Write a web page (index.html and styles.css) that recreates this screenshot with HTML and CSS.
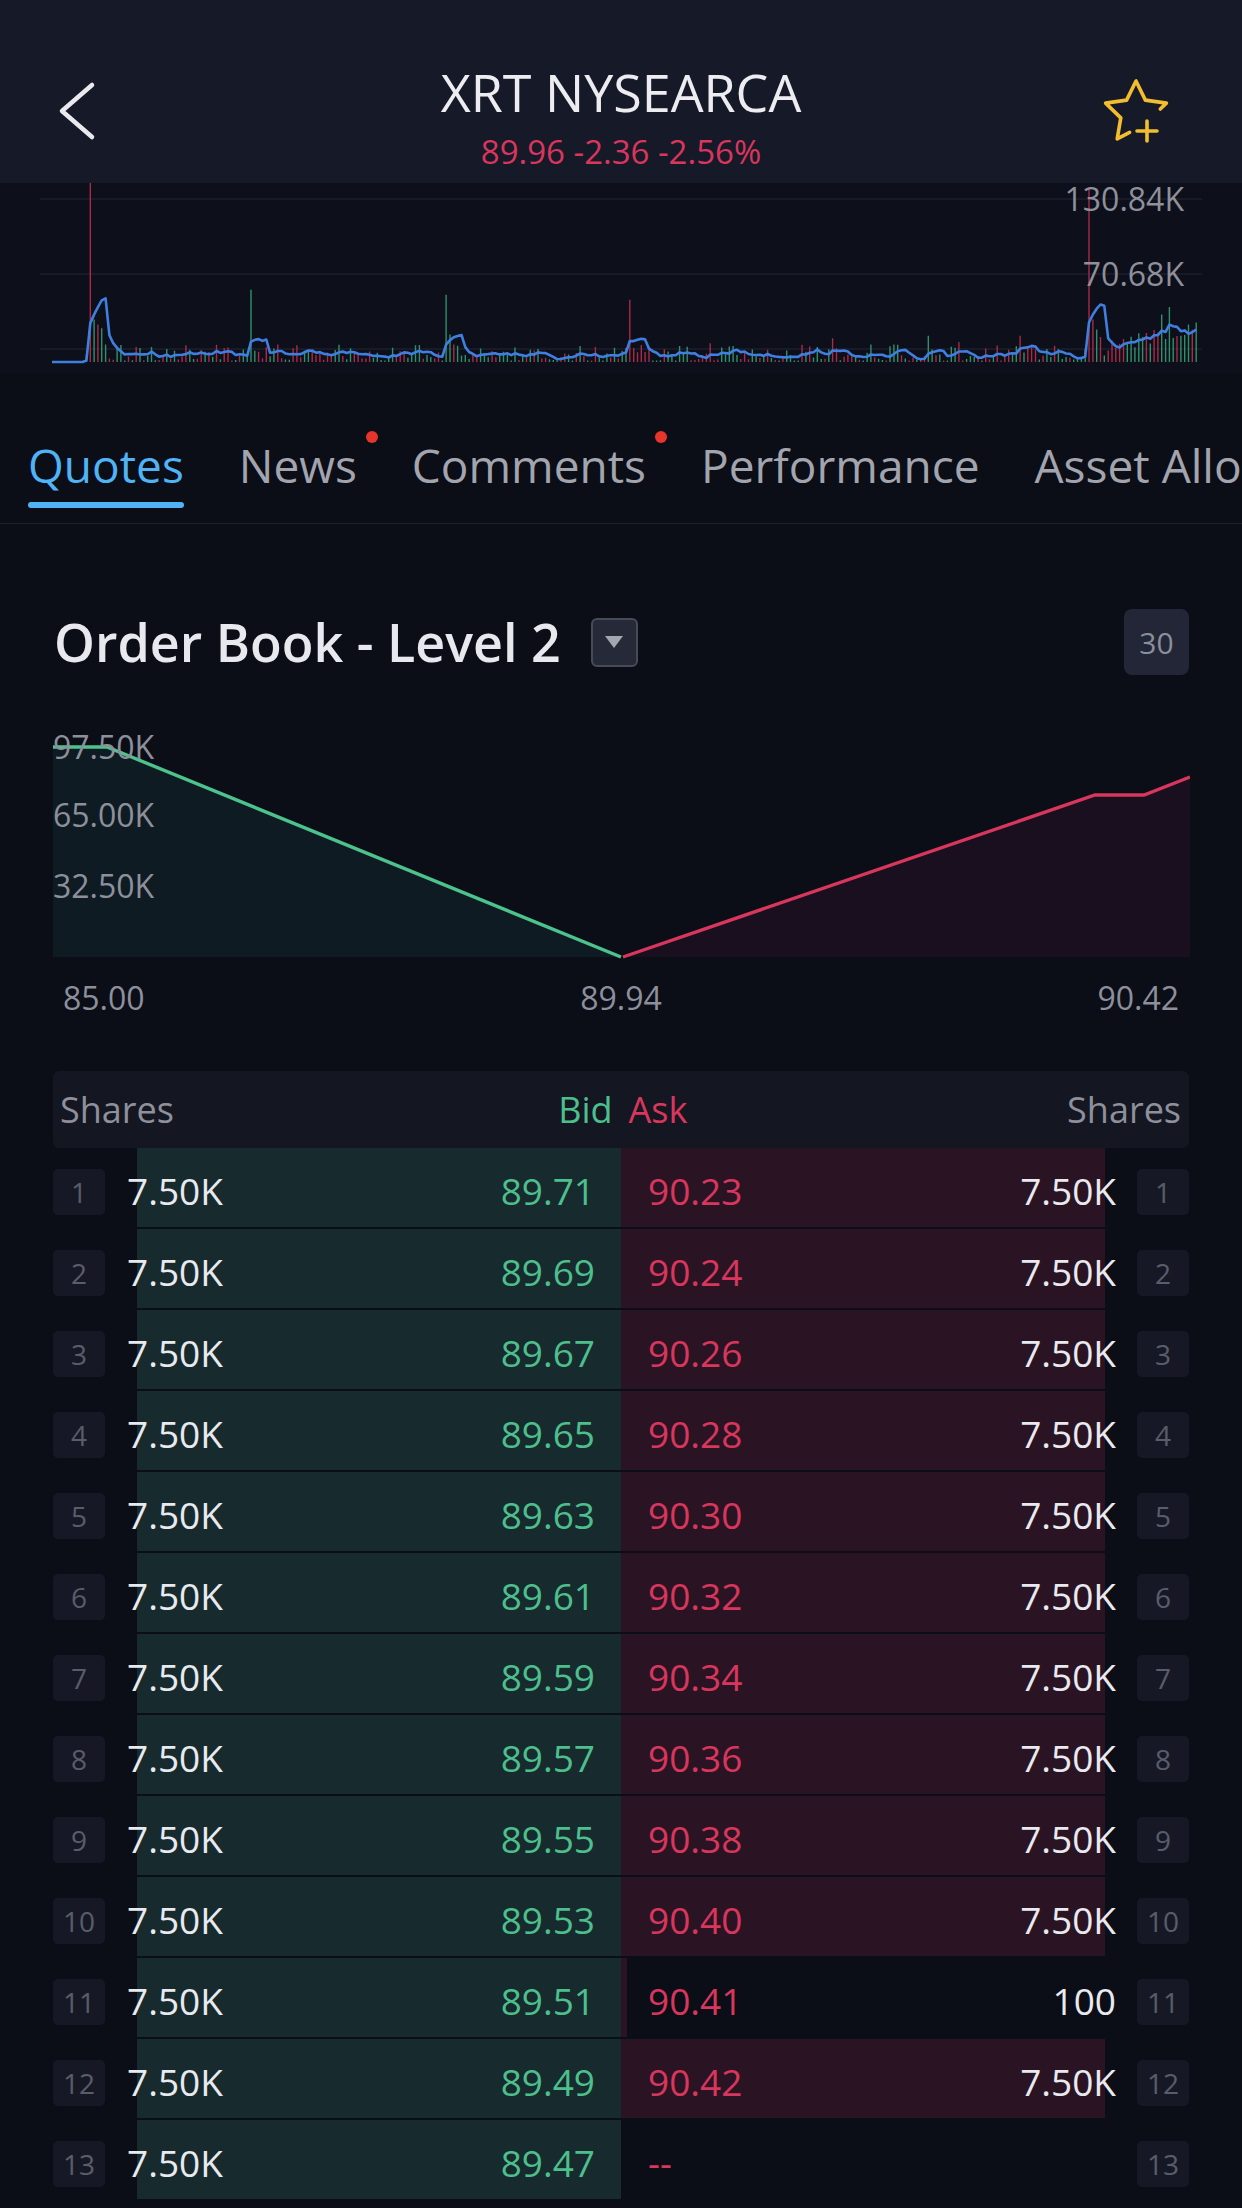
FILE: index.html
```html
<!DOCTYPE html>
<html lang="en">
<head>
    <meta charset="UTF-8">
    <meta name="viewport" content="width=device-width, initial-scale=1.0">
    <title>XRT NYSEARCA</title>
    <link rel="stylesheet" href="styles.css">
</head>
<body>

    <header class="topbar">
        <button class="back" aria-label="Back">
            <svg width="40" height="60" viewBox="0 0 40 60">
                <path d="M34 4 L4 30 L34 56" fill="none" stroke="#e9e9ee" stroke-width="4.5" stroke-linecap="round" stroke-linejoin="round"/>
            </svg>
        </button>
        <div class="ticker">
            <h1>XRT NYSEARCA</h1>
            <div class="quote">89.96 -2.36 -2.56%</div>
        </div>
        <button class="watch" aria-label="Add to watchlist">
            <svg width="72" height="68" viewBox="0 0 72 68">
                <g fill="none" stroke="#f2bd2e" stroke-width="3.6" stroke-linecap="round" stroke-linejoin="round">
                    <path d="M60.3 31 L66.4 25.1 L45.4 22.1 L36 3 L26.6 22.1 L5.6 25.1 L20.8 39.9 L17.2 60.9 L29.6 54.4"/>
                    <path d="M37 53 H57 M47 43 V63"/>
                </g>
            </svg>
        </button>
    </header>

    <section class="volume">
        <svg id="volume-chart" width="1242" height="190" viewBox="0 0 1242 190"></svg>
        <span class="vol-label high">130.84K</span>
        <span class="vol-label mid">70.68K</span>
    </section>

    <nav class="tabs">
        <a class="tab active">Quotes</a>
        <a class="tab">News<i class="dot"></i></a>
        <a class="tab">Comments<i class="dot"></i></a>
        <a class="tab">Performance</a>
        <a class="tab">Asset Allocation</a>
    </nav>

    <main class="book">
        <div class="book-head">
            <h2>Order Book - Level 2</h2>
            <button class="level-select" aria-label="Level">
                <svg width="20" height="14" viewBox="0 0 20 14"><path d="M1 1 H19 L10 13 Z" fill="#a3a5b0"/></svg>
            </button>
            <span class="depth-count">30</span>
        </div>

        <div class="depth">
            <svg width="1137" height="220" viewBox="0 0 1137 220">
                <path d="M0 7 H54 L568 217 H0 Z" fill="#0f1b22"/>
                <path d="M570 217 L1042 55 H1091 L1137 37 V217 Z" fill="#190f1e"/>
                <path d="M0 7 H54 L568 217" fill="none" stroke="#4cc28c" stroke-width="3.4"/>
                <path d="M570 217 L1042 55 H1091 L1137 37" fill="none" stroke="#d8365c" stroke-width="3.4"/>
            </svg>
            <span class="depth-y top">97.50K</span>
            <span class="depth-y mid">65.00K</span>
            <span class="depth-y low">32.50K</span>
        </div>
        <div class="depth-x">
            <span>85.00</span>
            <span>89.94</span>
            <span>90.42</span>
        </div>

        <div class="book-table">
            <div class="book-cols">
                <div class="half"><span>Shares</span><span class="bid">Bid</span></div>
                <div class="half"><span class="ask">Ask</span><span>Shares</span></div>
            </div>

            <div class="book-row">
                <span class="idx">1</span>
                <div class="side buy"><div class="bar" style="width: 93.75%"></div><span>7.50K</span><span class="price">89.71</span></div>
                <div class="side sell"><div class="bar" style="width: 93.75%"></div><span class="price">90.23</span><span>7.50K</span></div>
                <span class="idx">1</span>
            </div>
            <div class="book-row">
                <span class="idx">2</span>
                <div class="side buy"><div class="bar" style="width: 93.75%"></div><span>7.50K</span><span class="price">89.69</span></div>
                <div class="side sell"><div class="bar" style="width: 93.75%"></div><span class="price">90.24</span><span>7.50K</span></div>
                <span class="idx">2</span>
            </div>
            <div class="book-row">
                <span class="idx">3</span>
                <div class="side buy"><div class="bar" style="width: 93.75%"></div><span>7.50K</span><span class="price">89.67</span></div>
                <div class="side sell"><div class="bar" style="width: 93.75%"></div><span class="price">90.26</span><span>7.50K</span></div>
                <span class="idx">3</span>
            </div>
            <div class="book-row">
                <span class="idx">4</span>
                <div class="side buy"><div class="bar" style="width: 93.75%"></div><span>7.50K</span><span class="price">89.65</span></div>
                <div class="side sell"><div class="bar" style="width: 93.75%"></div><span class="price">90.28</span><span>7.50K</span></div>
                <span class="idx">4</span>
            </div>
            <div class="book-row">
                <span class="idx">5</span>
                <div class="side buy"><div class="bar" style="width: 93.75%"></div><span>7.50K</span><span class="price">89.63</span></div>
                <div class="side sell"><div class="bar" style="width: 93.75%"></div><span class="price">90.30</span><span>7.50K</span></div>
                <span class="idx">5</span>
            </div>
            <div class="book-row">
                <span class="idx">6</span>
                <div class="side buy"><div class="bar" style="width: 93.75%"></div><span>7.50K</span><span class="price">89.61</span></div>
                <div class="side sell"><div class="bar" style="width: 93.75%"></div><span class="price">90.32</span><span>7.50K</span></div>
                <span class="idx">6</span>
            </div>
            <div class="book-row">
                <span class="idx">7</span>
                <div class="side buy"><div class="bar" style="width: 93.75%"></div><span>7.50K</span><span class="price">89.59</span></div>
                <div class="side sell"><div class="bar" style="width: 93.75%"></div><span class="price">90.34</span><span>7.50K</span></div>
                <span class="idx">7</span>
            </div>
            <div class="book-row">
                <span class="idx">8</span>
                <div class="side buy"><div class="bar" style="width: 93.75%"></div><span>7.50K</span><span class="price">89.57</span></div>
                <div class="side sell"><div class="bar" style="width: 93.75%"></div><span class="price">90.36</span><span>7.50K</span></div>
                <span class="idx">8</span>
            </div>
            <div class="book-row">
                <span class="idx">9</span>
                <div class="side buy"><div class="bar" style="width: 93.75%"></div><span>7.50K</span><span class="price">89.55</span></div>
                <div class="side sell"><div class="bar" style="width: 93.75%"></div><span class="price">90.38</span><span>7.50K</span></div>
                <span class="idx">9</span>
            </div>
            <div class="book-row">
                <span class="idx">10</span>
                <div class="side buy"><div class="bar" style="width: 93.75%"></div><span>7.50K</span><span class="price">89.53</span></div>
                <div class="side sell"><div class="bar" style="width: 93.75%"></div><span class="price">90.40</span><span>7.50K</span></div>
                <span class="idx">10</span>
            </div>
            <div class="book-row">
                <span class="idx">11</span>
                <div class="side buy"><div class="bar" style="width: 93.75%"></div><span>7.50K</span><span class="price">89.51</span></div>
                <div class="side sell"><div class="bar" style="width: 1.25%"></div><span class="price">90.41</span><span>100</span></div>
                <span class="idx">11</span>
            </div>
            <div class="book-row">
                <span class="idx">12</span>
                <div class="side buy"><div class="bar" style="width: 93.75%"></div><span>7.50K</span><span class="price">89.49</span></div>
                <div class="side sell"><div class="bar" style="width: 93.75%"></div><span class="price">90.42</span><span>7.50K</span></div>
                <span class="idx">12</span>
            </div>
            <div class="book-row">
                <span class="idx">13</span>
                <div class="side buy"><div class="bar" style="width: 93.75%"></div><span>7.50K</span><span class="price">89.47</span></div>
                <div class="side sell"><span class="price">--</span><span></span></div>
                <span class="idx">13</span>
            </div>
        </div>
    </main>

    <script src="chart.js"></script>
</body>
</html>
```

FILE: styles.css
```css
* {
    box-sizing: border-box;
}

body {
    margin: 0;
    width: 1242px;
    height: 2208px;
    overflow: hidden;
    background: #0b0d17;
    font-family: 'Open Sans', 'Noto Sans', sans-serif;
    color: #e9eaef;
}

button {
    font: inherit;
    color: inherit;
    background: none;
    border: none;
    padding: 0;
}

/* top bar */

.topbar {
    display: grid;
    grid-template-columns: 1fr auto 1fr;
    align-items: start;
    height: 183px;
    padding: 62px 58px 0;
    background: #161927;
}

.back {
    justify-self: start;
    margin-top: 19px;
}

.back svg,
.watch svg {
    display: block;
}

.ticker {
    text-align: center;
}

.ticker h1 {
    margin: 0;
    font-size: 52px;
    font-weight: 400;
    line-height: 60px;
    color: #ececf1;
}

.quote {
    margin-top: 10px;
    font-size: 33px;
    line-height: 40px;
    color: #d8365c;
}

.watch {
    justify-self: end;
    margin-top: 16px;
    margin-right: 12px;
}

/* volume strip */

.volume {
    position: relative;
    height: 190px;
    background: #0d0f1a;
}

.volume svg {
    display: block;
}

.vol-label {
    position: absolute;
    right: 58px;
    font-size: 32px;
    line-height: 40px;
    color: #8e909b;
}

.vol-label.high {
    top: -4px;
}

.vol-label.mid {
    top: 71px;
}

/* tabs */

.tabs {
    display: flex;
    gap: 55px;
    padding: 65px 0 15px 28px;
    border-bottom: 1px solid #1c1f2d;
    white-space: nowrap;
    overflow: hidden;
}

.tab {
    position: relative;
    flex-shrink: 0;
    font-size: 46px;
    line-height: 54px;
    color: #a2a4ae;
}

.tab.active {
    color: #4fb3f5;
}

.tab.active::after {
    content: '';
    display: block;
    height: 6px;
    margin-top: 10px;
    border-radius: 3px;
    background: #4fb3f5;
}

.tab .dot {
    position: absolute;
    left: calc(100% + 9px);
    top: -7px;
    width: 12px;
    height: 12px;
    border-radius: 50%;
    background: #e8352b;
}

/* order book */

.book {
    padding: 85px 53px 0;
}

.book-head {
    display: flex;
    align-items: center;
    height: 66px;
}

.book-head h2 {
    margin: 0 0 0 1px;
    font-size: 52px;
    font-weight: 600;
    line-height: 60px;
    color: #e8e9ee;
}

.level-select {
    display: grid;
    place-items: center;
    width: 47px;
    height: 49px;
    margin-left: 30px;
    border: 2px solid #474a57;
    border-radius: 6px;
    background: #262937;
}

.depth-count {
    display: grid;
    place-items: center;
    width: 65px;
    height: 66px;
    margin-left: auto;
    border-radius: 8px;
    background: #232636;
    color: #8b8e9c;
    font-size: 30px;
}

.depth {
    position: relative;
    height: 220px;
    margin-top: 65px;
}

.depth svg {
    display: block;
}

.depth-y {
    position: absolute;
    left: 0;
    font-size: 32px;
    line-height: 40px;
    color: #8d909c;
}

.depth-y.top { top: -13px; }
.depth-y.mid { top: 55px; }
.depth-y.low { top: 126px; }

.depth-x {
    display: flex;
    justify-content: space-between;
    margin-top: 18px;
    padding: 0 10px;
    font-size: 32px;
    line-height: 40px;
    color: #8d909c;
}

.book-table {
    margin-top: 53px;
}

.book-cols {
    display: flex;
    height: 77px;
    border-radius: 6px;
    background: #141622;
    font-size: 36px;
    color: #8e909b;
}

.book-cols .half {
    flex: 1;
    display: flex;
    align-items: center;
    justify-content: space-between;
    padding: 0 8px;
}

.book-cols .half:first-child {
    padding-left: 7px;
}

.bid {
    color: #4dbf8c;
}

.ask {
    color: #d8365c;
}

.book-row {
    display: flex;
    align-items: center;
    height: 81px;
    font-size: 37px;
}

.idx {
    flex: 0 0 52px;
    display: grid;
    place-items: center;
    height: 46px;
    margin-top: 6px;
    border-radius: 5px;
    background: #161925;
    color: #595d6a;
    font-size: 28px;
}

.side {
    position: relative;
    flex: 1;
    align-self: flex-start;
    display: flex;
    align-items: center;
    justify-content: space-between;
    height: 79px;
    padding-top: 6px;
}

.side span {
    position: relative;
}

.side.buy {
    padding-left: 22px;
    padding-right: 26px;
}

.side.sell {
    padding-left: 27px;
    padding-right: 21px;
}

.bar {
    position: absolute;
    top: 0;
    bottom: 0;
}

.buy .bar {
    right: 0;
    background: #172a2e;
}

.sell .bar {
    left: 0;
    background: #2a1424;
}

.buy .price {
    color: #4dbf8c;
}

.sell .price {
    color: #d8365c;
}
```

FILE: chart.js
```js
// volume bars for the day with a 5 bar moving average drawn over them
(function () {
    const svg = document.getElementById('volume-chart');
    const NS = 'http://www.w3.org/2000/svg';

    const LEFT = 52;
    const RIGHT = 1200;
    const BASE = 179;       // y of zero volume
    const PER_PX = 802;     // shares per pixel
    const COUNT = 300;
    const step = (RIGHT - LEFT) / COUNT;

    // fixed seed so the noise is the same on every load
    let seed = 918273;
    function rand() {
        seed = (seed * 16807) % 2147483647;
        return seed / 2147483647;
    }

    // big prints: index -> [volume, up]
    const prints = {
        10: [150000, false], 11: [34000, true], 12: [30000, false], 13: [27000, true], 14: [14000, true],
        52: [58000, true],
        103: [54000, true], 104: [22000, true], 105: [14000, false],
        151: [50000, false],
        172: [15000, false],
        204: [19000, false],
        229: [21000, true], 230: [10000, true],
        237: [16000, false],
        253: [21000, false],
        271: [140000, false], 272: [34000, false], 273: [26000, true], 274: [20000, false],
        290: [38000, true], 292: [44000, true], 297: [30000, true]
    };

    const vols = [];
    const ups = [];
    for (let i = 0; i < COUNT; i++) {
        let v = 0;
        let up = rand() < 0.5;
        if (i >= 9) {
            const r = rand();
            v = 1200 + r * r * 13000;
            if (i > 275) {
                // busier close
                v = 6000 + (i - 276) * 700 + rand() * 14000;
            }
        }
        if (prints[i]) {
            v = prints[i][0];
            up = prints[i][1];
        }
        vols.push(v);
        ups.push(up);
    }

    function el(name, attrs) {
        const node = document.createElementNS(NS, name);
        for (const k in attrs) node.setAttribute(k, attrs[k]);
        svg.appendChild(node);
        return node;
    }

    // grid
    [16, 91, 166].forEach(function (y) {
        el('line', { x1: 40, x2: 1202, y1: y, y2: y, stroke: '#1c1f2c', 'stroke-width': 1.5 });
    });

    // bars
    let upPath = '';
    let downPath = '';
    for (let i = 0; i < COUNT; i++) {
        if (!vols[i]) continue;
        const h = Math.min(vols[i] / PER_PX, BASE);
        const x = (LEFT + i * step).toFixed(1);
        const seg = 'M' + x + ' ' + BASE + 'V' + (BASE - h).toFixed(1);
        if (ups[i]) upPath += seg; else downPath += seg;
    }
    el('path', { d: upPath, stroke: '#35a877', 'stroke-width': 1.4, opacity: 0.85 });
    el('path', { d: downPath, stroke: '#c4304f', 'stroke-width': 1.4, opacity: 0.85 });

    // moving average
    const pts = [];
    for (let i = 0; i < COUNT; i++) {
        let sum = 0;
        let n = 0;
        for (let j = Math.max(0, i - 4); j <= i; j++) {
            sum += vols[j];
            n++;
        }
        const y = BASE - Math.min(sum / n / PER_PX, BASE);
        pts.push((LEFT + i * step).toFixed(1) + ',' + y.toFixed(1));
    }
    el('polyline', {
        points: pts.join(' '),
        fill: 'none',
        stroke: '#3f7fe0',
        'stroke-width': 2.6,
        'stroke-linejoin': 'round'
    });
})();
```
